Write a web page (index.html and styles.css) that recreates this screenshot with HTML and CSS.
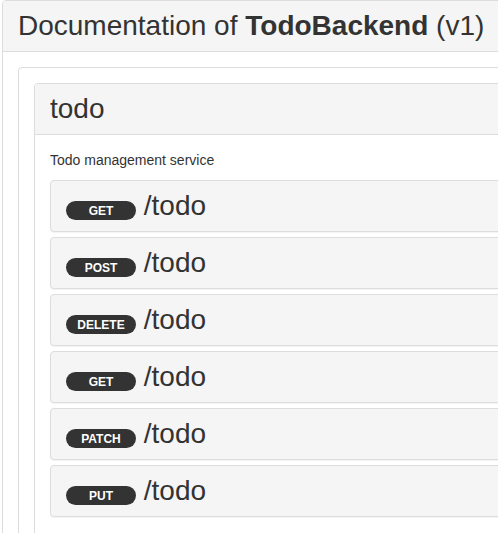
FILE: index.html
```html
<!DOCTYPE html>
<html>
<head>
<meta charset="utf-8">
<link rel="stylesheet" href="styles.css">
</head>
<body>
<div class="page">
  <div class="panel">
    <div class="panel-heading">
      <h1 class="title">Documentation of <b>TodoBackend</b> (v1)</h1>
    </div>
    <div class="panel-body">
      <div class="panel">
        <div class="panel-body">
          <div class="panel">
            <div class="panel-heading">
              <h2 class="title">todo</h2>
            </div>
            <div class="panel-body">
              <p class="desc">Todo management service</p>
              <div class="ops">
                <div class="op"><h3 class="title"><span class="verb">GET</span> /todo</h3></div>
                <div class="op"><h3 class="title"><span class="verb">POST</span> /todo</h3></div>
                <div class="op"><h3 class="title"><span class="verb">DELETE</span> /todo</h3></div>
                <div class="op"><h3 class="title"><span class="verb">GET</span> /todo</h3></div>
                <div class="op"><h3 class="title"><span class="verb">PATCH</span> /todo</h3></div>
                <div class="op"><h3 class="title"><span class="verb">PUT</span> /todo</h3></div>
              </div>
            </div>
          </div>
        </div>
      </div>
    </div>
  </div>
</div>
</body>
</html>
```
FILE: styles.css
```css
html, body {
  margin: 0;
  padding: 0;
  overflow: hidden;
  background: #fff;
}
body {
  font-family: "Liberation Sans", Arial, sans-serif;
  font-size: 14px;
  line-height: 20px;
  color: #333;
}
.page {
  padding-left: 2px;
  width: 900px;
}
.panel {
  background: #fff;
  border: 1px solid #ddd;
  border-radius: 4px;
  box-shadow: 0 1px 1px rgba(0,0,0,.05);
}
.panel-heading {
  background: #f5f5f5;
  border-bottom: 1px solid #ddd;
  border-radius: 3px 3px 0 0;
  padding: 10px 15px;
}
.panel-body {
  padding: 15px;
}
.title {
  margin: 0;
  font-size: 28px;
  line-height: 30px;
  font-weight: normal;
  color: #333;
}
.title b {
  font-weight: bold;
}
.desc {
  margin: 0 0 10px;
}
.ops {
  display: flex;
  flex-direction: column;
  gap: 5px;
  padding-bottom: 30px;
}
.op {
  background: #f5f5f5;
  border: 1px solid #ddd;
  border-radius: 4px;
  box-shadow: 0 1px 1px rgba(0,0,0,.05);
  padding: 10px 15px;
}
.verb {
  display: inline-block;
  width: 70px;
  box-sizing: border-box;
  text-align: center;
  background: #333;
  color: #fff;
  font-size: 12px;
  font-weight: bold;
  line-height: 12px;
  padding: 4px 0 3px;
  border-radius: 10px;
  vertical-align: 0;
}
```
